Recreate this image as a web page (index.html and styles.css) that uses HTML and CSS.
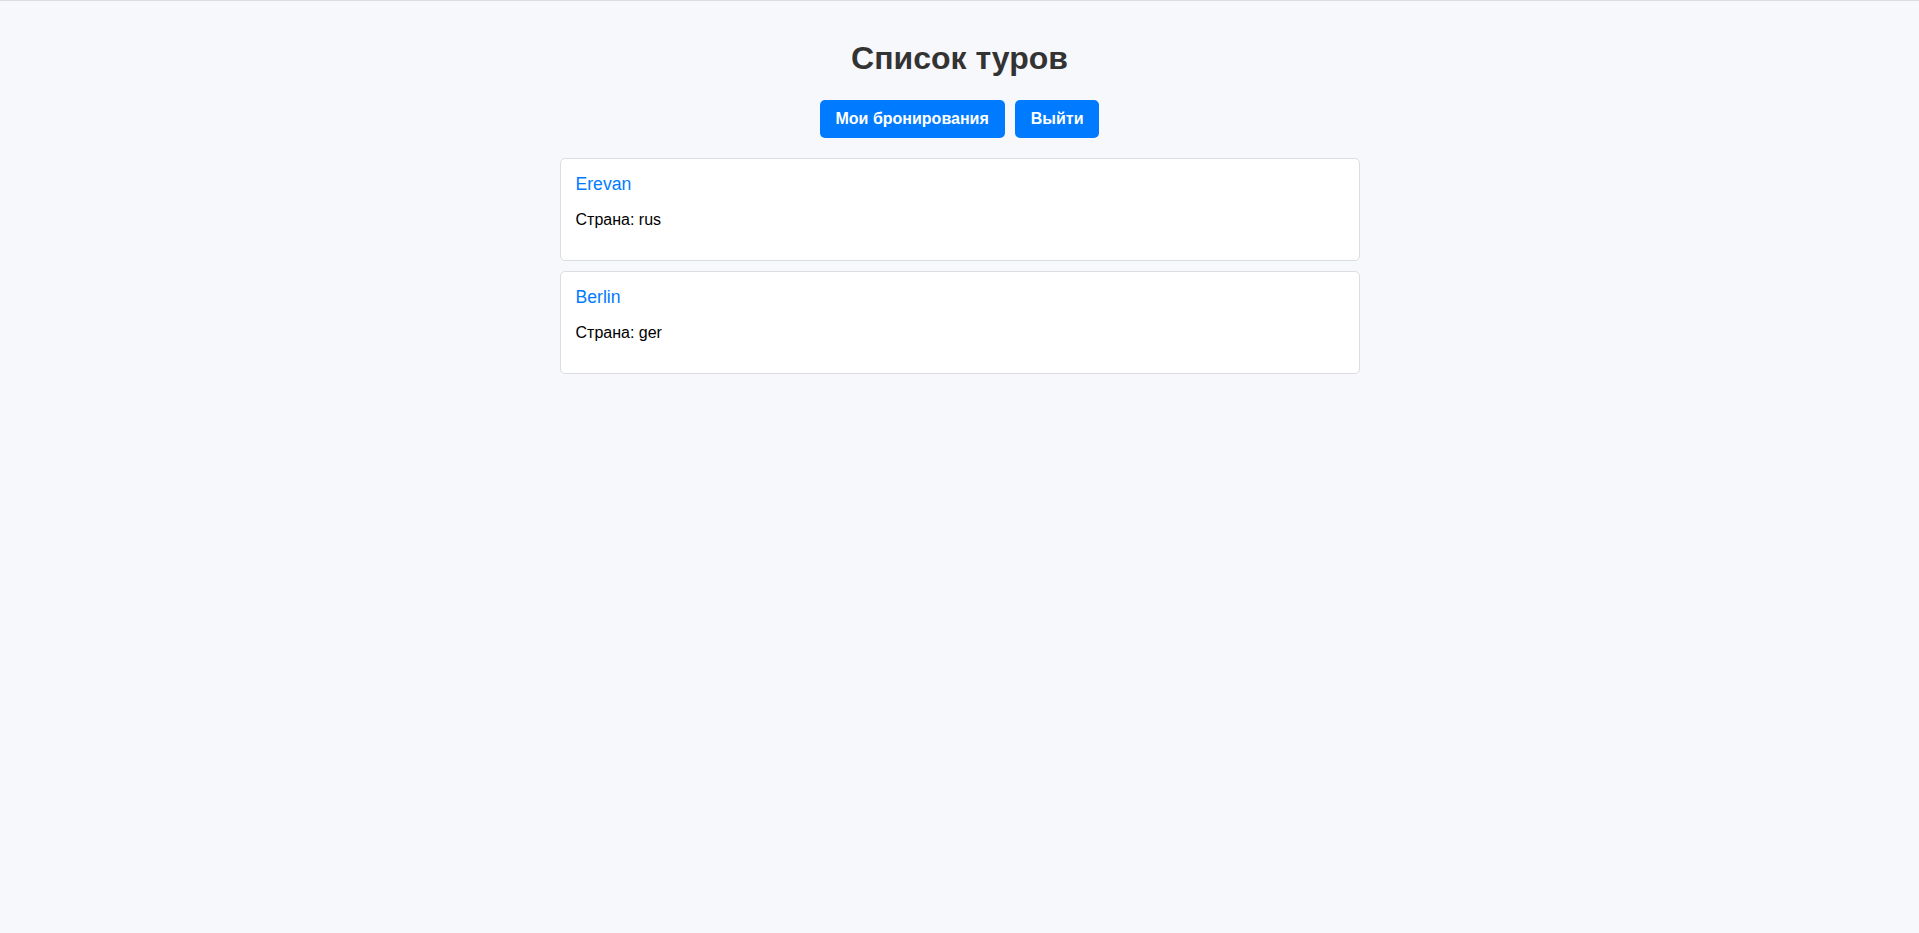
FILE: index.html
```html
<!DOCTYPE html>
<html lang="ru">
<head>
<meta charset="utf-8">
<title>Список туров</title>
<link rel="stylesheet" href="styles.css">
</head>
<body>
<div class="page">
  <h1 class="title">Список туров</h1>
  <div class="actions">
    <button class="btn">Мои бронирования</button>
    <button class="btn">Выйти</button>
  </div>
  <div class="tours">
    <div class="tour-card">
      <h3 class="tour-name">Erevan</h3>
      <p class="tour-country">Страна: rus</p>
    </div>
    <div class="tour-card">
      <h3 class="tour-name">Berlin</h3>
      <p class="tour-country">Страна: ger</p>
    </div>
  </div>
</div>
</body>
</html>
```

FILE: styles.css
```css
html, body {
  margin: 0;
  padding: 0;
  background: #f7f8fc;
}
body {
  font-family: "Liberation Sans", Arial, sans-serif;
  border-top: 1px solid #dcdde1;
  min-height: 932px;
  box-sizing: border-box;
}
.page {
  display: flex;
  flex-direction: column;
  align-items: center;
  padding-top: 39px;
}
.title {
  margin: 0 0 23px;
  font-size: 32px;
  line-height: 37px;
  font-weight: bold;
  color: #333;
}
.actions {
  display: flex;
  gap: 10px;
  margin-bottom: 20px;
}
.btn {
  background: #007bff;
  color: #fff;
  border: none;
  border-radius: 5px;
  padding: 10px 16px;
  font-family: "Liberation Sans", Arial, sans-serif;
  font-size: 16px;
  font-weight: bold;
  line-height: 18px;
  cursor: pointer;
}
.tours {
  width: 800px;
  display: flex;
  flex-direction: column;
  gap: 10px;
}
.tour-card {
  background: #fff;
  border: 1px solid #dcdde0;
  border-radius: 5px;
  padding: 15px;
}
.tour-name {
  margin: 0;
  font-size: 17.6px;
  font-weight: normal;
  color: #007bff;
}
.tour-country {
  margin: 16px 0;
  font-size: 16px;
  color: #000;
}
```
